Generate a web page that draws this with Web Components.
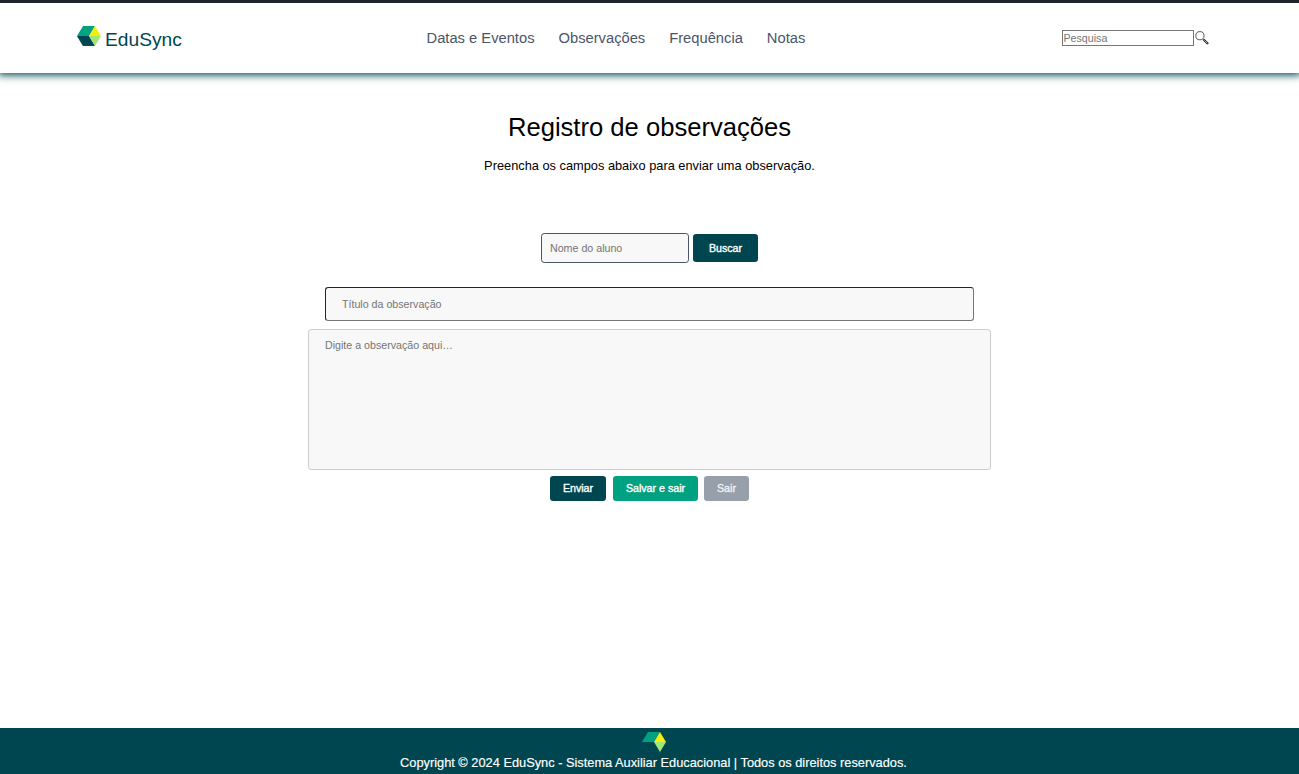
<!DOCTYPE html>
<html lang="pt-BR">
<head>
<meta charset="utf-8">
<title>EduSync</title>
<style>
html,body{margin:0;height:100%}
body{font-family:"Liberation Sans",Arial,sans-serif;background:#fff;color:#000;overflow:hidden}
</style>
</head>
<body>
<edu-page></edu-page>
<script>
const define = (name, html) => {
  const template = document.createElement('template');
  template.innerHTML = html;
  customElements.define(name, class extends HTMLElement {
    constructor() {
      super();
      this.attachShadow({ mode: 'open' }).append(template.content.cloneNode(true));
      const field = this.shadowRoot.querySelector('input,textarea');
      if (field) field.placeholder = this.getAttribute('placeholder') || '';
    }
  });
};

define('edu-logo', `<style>:host{display:block;width:24px;height:20px;flex:none}svg{display:block}</style>
<svg width="24" height="20" viewBox="0 0 24 20">
<path fill="#00a180" d="M6 0H18L12 10H0z"/><path fill="#004650" d="M0 10H12L18 20H6z"/>
<path fill="#f3ee0c" d="M18 0L24 10H12z"/><path fill="#a3e578" d="M12 10H24L18 20z"/>
<path fill="none" stroke="#12616a" stroke-width=".6" opacity=".6" d="M.3 10L6 19.7H18"/></svg>`);

define('edu-link', `<style>:host{display:block}a{color:#4a5568;text-decoration:none;font-size:14.72px;line-height:20px;white-space:nowrap}</style><a><slot></slot></a>`);

define('edu-search', `<style>:host{display:flex;align-items:center}
input{box-sizing:border-box;width:132px;height:16px;border:1px solid #767676;padding:1px .5px;margin:0;font:10.667px "Liberation Sans",Arial,sans-serif;background:#fff;border-radius:0}
input::placeholder{color:#757575}svg{display:block;margin-left:1px}</style>
<input>
<svg width="14" height="14" viewBox="0 0 14 14" fill="none"><circle cx="4.9" cy="4.7" r="4.1" fill="#fff" stroke="#444" stroke-width=".9"/><path d="M7.9 7.8L9.5 9.4" stroke="#555" stroke-width=".9"/><path d="M9.3 9.2L12.4 12.3" stroke="#222" stroke-width="2.3" stroke-linecap="round"/><path d="M9.4 9.3L12.4 12.3" stroke="#ccc" stroke-width=".9"/></svg>`);

define('edu-header', `<style>
:host{display:grid;grid-template-columns:350px 1fr 237px;box-sizing:border-box;height:73px;border-top:3px solid #212529;background:#fff;box-shadow:0 0 8px 2px #004650;align-items:start}
.brand{display:flex;gap:4px;padding:23px 0 0 77px}
.name{color:#004650;font-size:19.2px;line-height:22px;margin-top:3px}
nav{display:flex;gap:24px;padding:25px 0 0 76.5px}
edu-search{padding-top:27px}
</style>
<div class="brand"><edu-logo></edu-logo><span class="name">EduSync</span></div>
<nav><edu-link>Datas e Eventos</edu-link><edu-link>Observações</edu-link><edu-link>Frequência</edu-link><edu-link>Notas</edu-link></nav>
<edu-search placeholder="Pesquisa"></edu-search>`);

const fieldBase = `box-sizing:border-box;display:block;width:100%;height:100%;margin:0;font:10.667px "Liberation Sans",Arial,sans-serif;background:#f8f8f8;border-radius:3.2px;outline:0;`;
define('edu-input', `<style>:host{display:block}input{${fieldBase}border:1px solid var(--line);border-color:var(--line-colors,var(--line));padding:0 var(--pad)}input::placeholder{color:#757575}</style><input>`);
define('edu-textarea', `<style>:host{display:block}textarea{${fieldBase}border:1px solid #ccc;padding:9px 16px;line-height:13px;resize:none}textarea::placeholder{color:#757575}</style><textarea></textarea>`);
define('edu-button', `<style>:host{display:block}button{display:block;box-sizing:border-box;width:100%;height:100%;border:0;border-radius:3.2px;margin:0;padding:0 0 var(--lift,0);background:var(--fill);color:var(--ink,#fff);font:10.667px "Liberation Sans",Arial,sans-serif;-webkit-text-stroke:.35px currentColor;white-space:nowrap}</style><button><slot></slot></button>`);

define('edu-form', `<style>
:host{display:flex;flex-direction:column;align-items:center}
h1{font-weight:400;font-size:25.6px;line-height:30px;margin:39px 0 0}
p{font-size:12.8px;line-height:16px;margin:16px 0 0}
.find{display:flex;align-items:center;gap:4px;margin-top:59px}
.student{width:148px;height:30px;--line:#4a5568;--pad:8px}
.go{width:65px;height:28px;--fill:#004650}
.title{width:649px;height:34px;margin-top:24px;--line:#212529;--line-colors:#212529 #767676 #767676 #212529;--pad:16px}
.text{width:683px;height:141px;margin-top:8px}
.actions{display:flex;margin-top:6px}
.actions edu-button{height:25px;--lift:1px}
.send{width:56px;--fill:#004650}.save{width:85px;margin-left:7px;--fill:#00a180}.exit{width:45px;margin-left:6px;--fill:#979fab;--ink:#f0f1f3}
</style>
<h1>Registro de observações</h1>
<p>Preencha os campos abaixo para enviar uma observação.</p>
<div class="find"><edu-input class="student" placeholder="Nome do aluno"></edu-input><edu-button class="go">Buscar</edu-button></div>
<edu-input class="title" placeholder="Título da observação"></edu-input>
<edu-textarea class="text" placeholder="Digite a observação aqui…"></edu-textarea>
<div class="actions"><edu-button class="send">Enviar</edu-button><edu-button class="save">Salvar e sair</edu-button><edu-button class="exit">Sair</edu-button></div>`);

define('edu-footer', `<style>:host{display:flex;flex-direction:column;align-items:center;box-sizing:border-box;height:46px;padding:4px 0 0 8px;background:#004650;color:#fff;font-size:12.8px}
span{line-height:16px;margin-top:3px;-webkit-text-stroke:.15px #fff}</style>
<edu-logo></edu-logo><span>Copyright © 2024 EduSync - Sistema Auxiliar Educacional | Todos os direitos reservados.</span>`);

define('edu-page', `<style>:host{display:flex;flex-direction:column;height:774px}edu-form{flex:1}</style>
<edu-header></edu-header><edu-form></edu-form><edu-footer></edu-footer>`);
</script>
</body>
</html>
